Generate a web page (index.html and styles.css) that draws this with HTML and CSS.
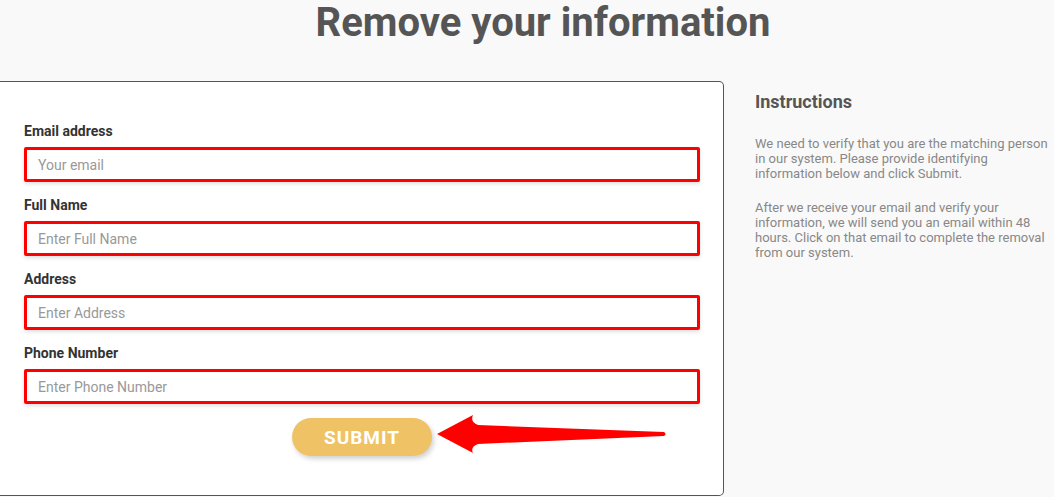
FILE: index.html
```html
<!DOCTYPE html>
<html>
<head>
    <title>Remove your information</title>
    <link rel="stylesheet" href="styles.css">
</head>
<body>
    <h1 class="title">Remove your information</h1>
    <div class="main">
        <div class="card">
            <form id="removeForm">
                <label for="email">Email address</label>
                <input type="text" id="email" placeholder="Your email">
                <label for="name">Full Name</label>
                <input type="text" id="name" placeholder="Enter Full Name">
                <label for="address">Address</label>
                <input type="text" id="address" placeholder="Enter Address">
                <label for="phone">Phone Number</label>
                <input type="text" id="phone" placeholder="Enter Phone Number">
                <div class="actions">
                    <button type="submit">SUBMIT</button>
                </div>
            </form>
            <svg class="arrow" width="245" height="55" viewBox="0 0 245 55">
                <path d="M7,27 L43,8 Q40,15 48,18 L234,25 Q237,27 234,29 L48,37 Q40,40 43,46 Z" fill="#ff0000"/>
            </svg>
        </div>
        <div class="side">
            <h2>Instructions</h2>
            <p>We need to verify that you are the matching person in our system. Please provide identifying information below and click Submit.</p>
            <p>After we receive your email and verify your information, we will send you an email within 48 hours. Click on that email to complete the removal from our system.</p>
        </div>
    </div>
</body>
</html>
```

FILE: styles.css
```css
body {
    font-family: Roboto, Arial, sans-serif;
    background-color: #f9f9f9;
    margin: 0;
    padding: 0;
}
.title {
    margin: 0;
    padding-top: 2px;
    font-size: 40px;
    line-height: 41px;
    font-weight: bold;
    color: #555;
    text-align: center;
    padding-left: 32px;
}
.main {
    display: flex;
    align-items: flex-start;
    margin-top: 38px;
}
.card {
    position: relative;
    width: 676px;
    background: white;
    border: 1px solid #555;
    border-left: none;
    border-radius: 0 5px 5px 0;
    padding: 41px 23px 39px 24px;
}
form {
    display: flex;
    flex-direction: column;
}
label {
    font-size: 14px;
    line-height: 17px;
    font-weight: bold;
    color: #333;
    margin-bottom: 7px;
}
input[type="text"] {
    height: 35px;
    box-sizing: border-box;
    border: 3px solid #ff0000;
    border-radius: 2px;
    padding: 0 11px;
    font-family: Roboto, Arial, sans-serif;
    font-size: 14px;
    color: #333;
    margin-bottom: 15px;
    box-shadow: 0 2px 4px rgba(0,0,0,0.12);
    outline: none;
}
input::placeholder {
    color: #999;
}
.actions {
    display: flex;
    justify-content: center;
    margin-top: -1px;
}
button {
    width: 140px;
    height: 38px;
    background: #f0c266;
    color: white;
    border: none;
    border-radius: 19px;
    font-family: Roboto, Arial, sans-serif;
    font-size: 19px;
    font-weight: bold;
    letter-spacing: 1px;
    cursor: pointer;
    box-shadow: 2px 3px 5px rgba(0,0,0,0.18);
}
.arrow {
    position: absolute;
    left: 430px;
    top: 325px;
}
.side {
    width: 298px;
    margin-left: 31px;
    padding-top: 11px;
}
.side h2 {
    margin: 0 0 24px 0;
    font-size: 18px;
    line-height: 20px;
    color: #555;
}
.side p {
    margin: 0 0 19px 0;
    font-size: 13px;
    line-height: 15px;
    color: #888;
}
```
